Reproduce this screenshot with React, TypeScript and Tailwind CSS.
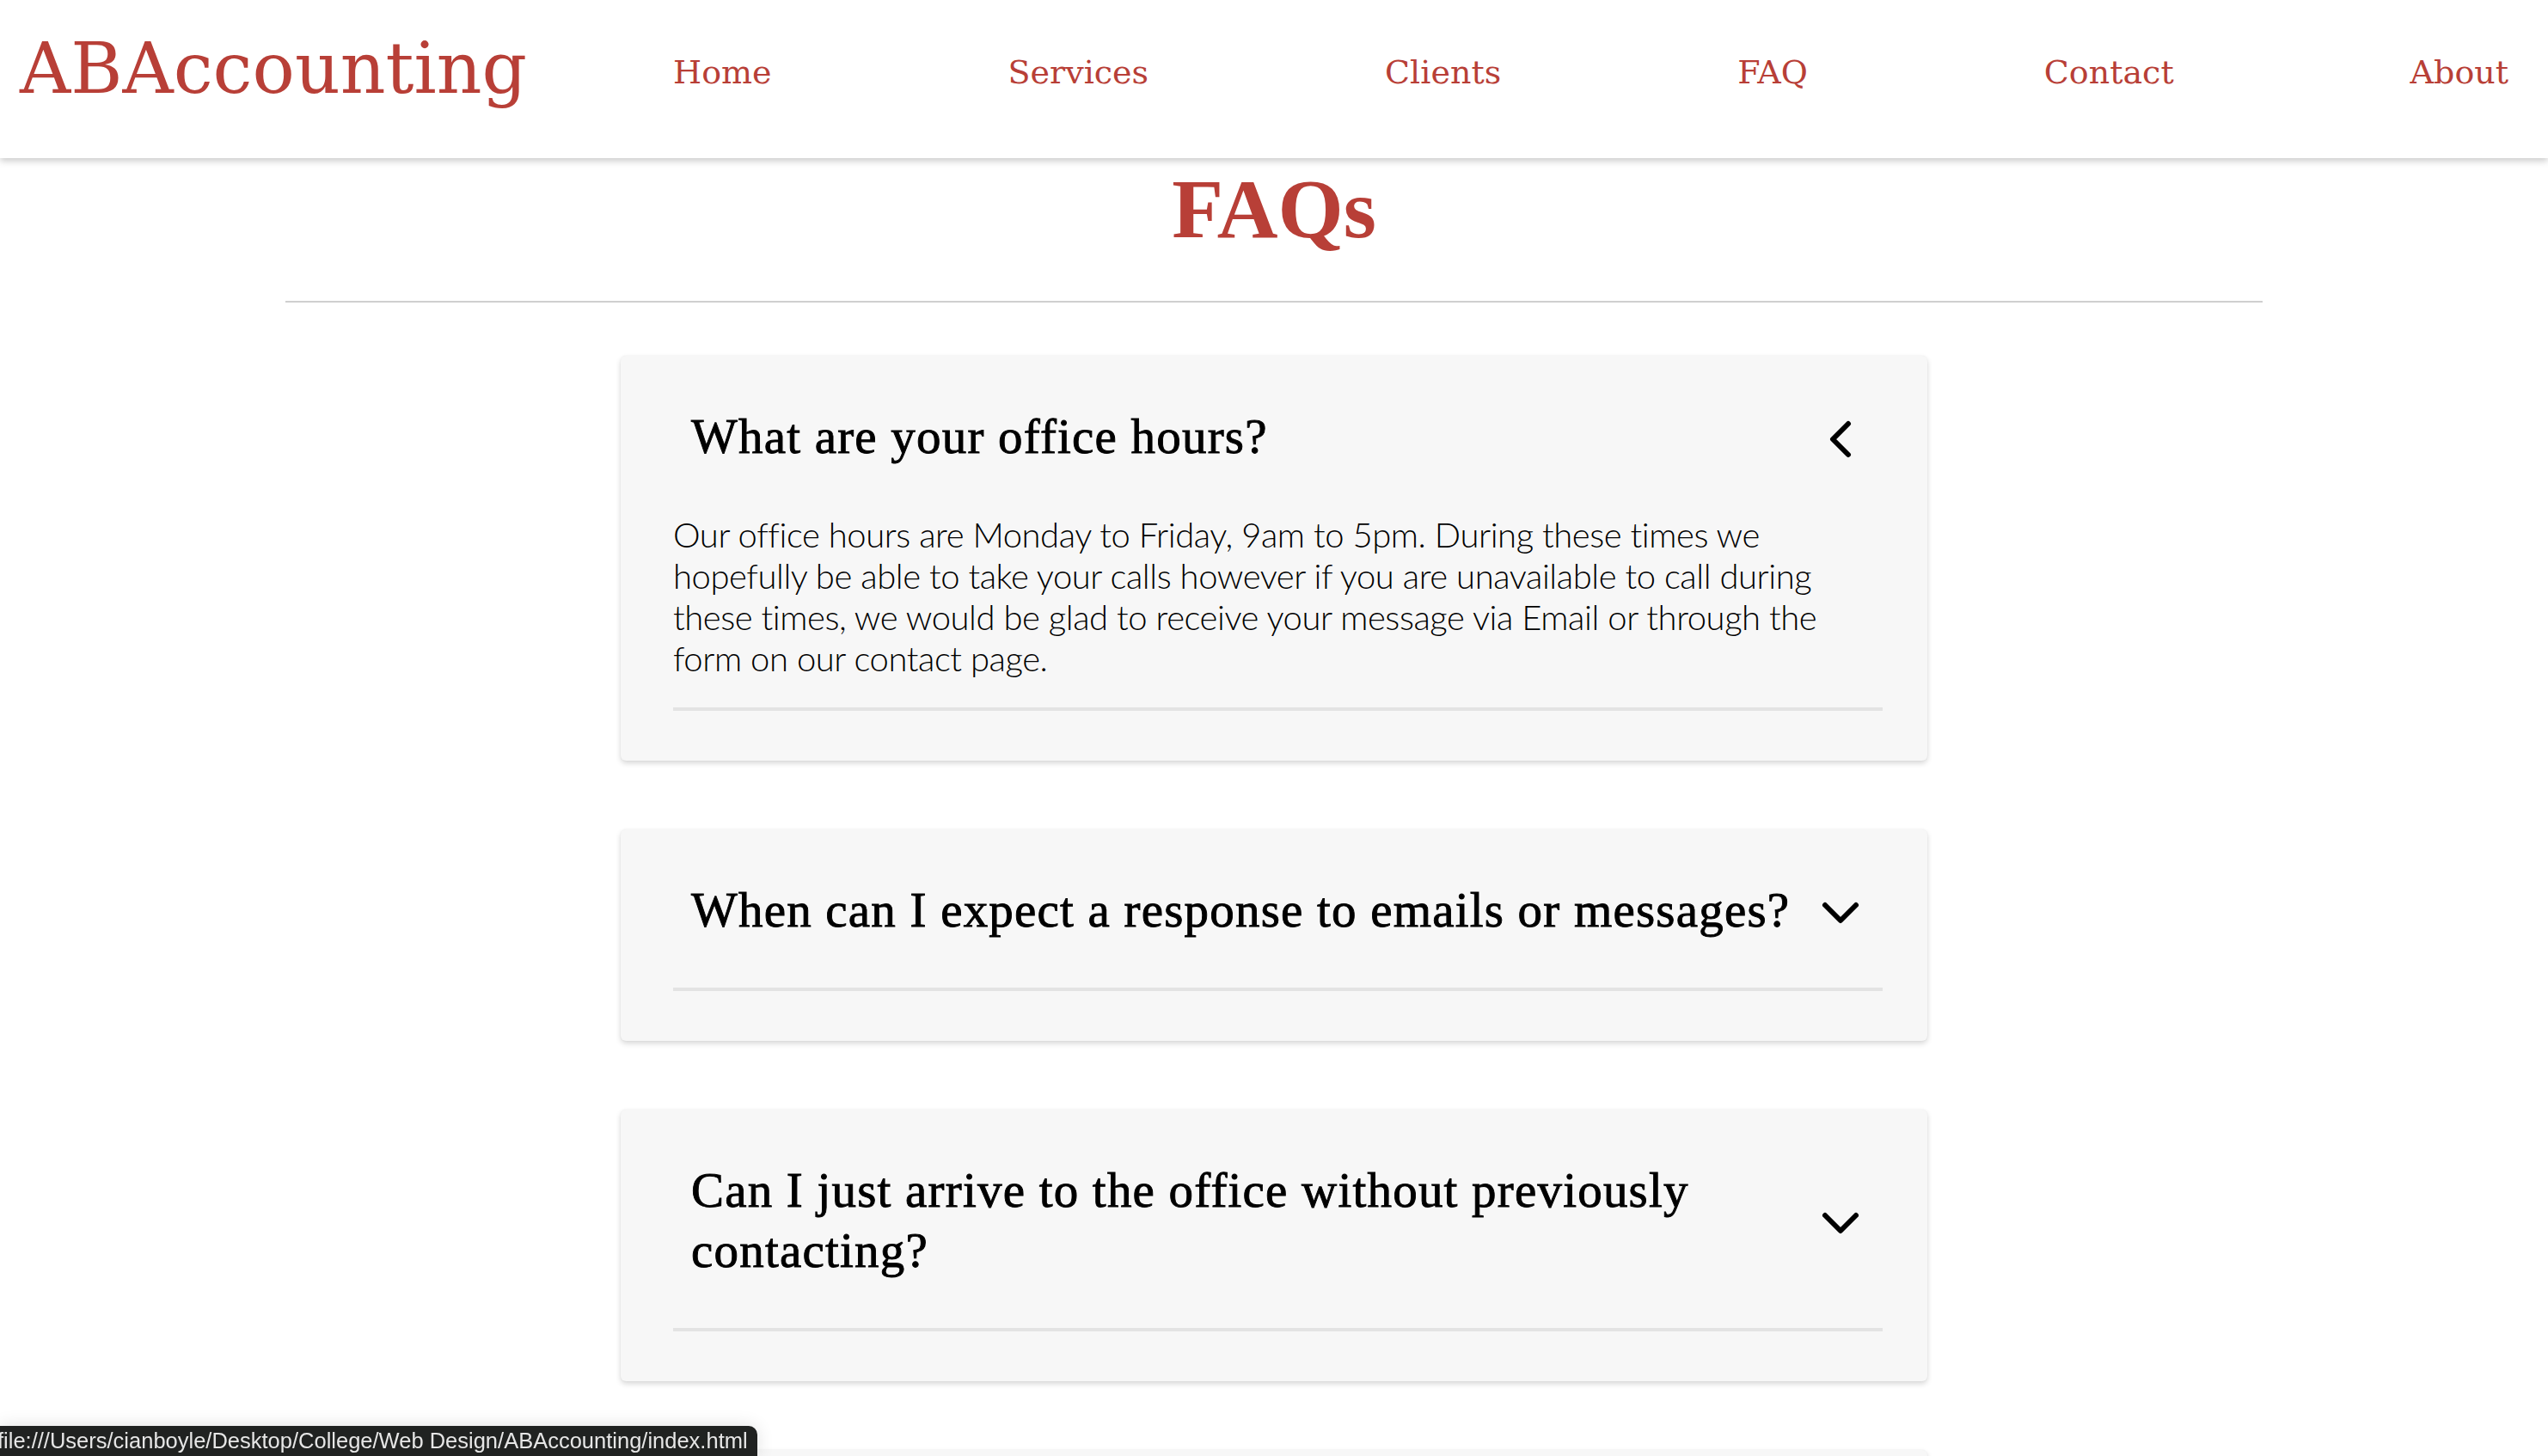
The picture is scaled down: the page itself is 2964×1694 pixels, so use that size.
import React from "react";
import { ChevronLeft, ChevronDown } from "lucide-react";

const faqs = [
  {
    q: "What are your office hours?",
    a: "Our office hours are Monday to Friday, 9am to 5pm. During these times we hopefully be able to take your calls however if you are unavailable to call during these times, we would be glad to receive your message via Email or through the form on our contact page.",
    open: true,
  },
  { q: "When can I expect a response to emails or messages?", a: "", open: false },
  { q: "Can I just arrive to the office without previously contacting?", a: "", open: false },
  { q: "Do you offer a free initial consultation?", a: "", open: false },
];

function FaqCard({ q, a, open }: { q: string; a: string; open: boolean }) {
  return (
    <div className="w-[1520px] mx-auto bg-[#f7f7f7] rounded-[6px] shadow-[0_3px_6px_rgba(0,0,0,0.16),0_0_2px_rgba(0,0,0,0.05)] pl-[61px] pr-[52px] pt-[59px] pb-[58px]">
      <div className="flex items-center justify-between gap-4 pl-[21px]">
        <h3
          className="text-[57px] leading-[70px] tracking-[1.2px] text-black [-webkit-text-stroke:0.9px_#000]"
          style={{ fontFamily: '"Liberation Serif", "DejaVu Serif", serif' }}
        >
          {q}
        </h3>
        <div className="mr-[13px] h-[70px] pt-[6px] flex items-center shrink-0">
          {open ? (
            <ChevronLeft size={72} strokeWidth={2} color="#000" />
          ) : (
            <ChevronDown size={72} strokeWidth={2} color="#000" />
          )}
        </div>
      </div>
      {open && (
        <p
          className="mt-[55px] text-[40px] leading-[48px] tracking-[-0.45px] font-light text-black"
          style={{ fontFamily: 'Lato, "Open Sans", sans-serif' }}
        >
          {a}
        </p>
      )}
      <div className={`${open ? "mt-[33px]" : "mt-[55px]"} h-[4px] bg-[#e3e3e3]`} />
    </div>
  );
}

export default function App() {
  const links = ["Home", "Services", "Clients", "FAQ", "Contact", "About"];
  return (
    <div className="min-h-screen bg-white">
      <nav
        className="relative z-10 h-[184px] bg-white flex items-start pl-[23px] pr-[46px] shadow-[0_3px_8px_rgba(0,0,0,0.22)]"
        style={{ fontFamily: '"DejaVu Serif", serif' }}
      >
        <div className="mt-[39px] text-[82px] leading-[82px] text-[#b83f37]">
          ABAccounting
        </div>
        <ul className="flex-1 flex justify-between ml-[170px] mt-[65px]">
          {links.map((l) => (
            <li key={l} className="text-[38px] leading-[38px] text-[#b83f37]">
              {l}
            </li>
          ))}
        </ul>
      </nav>

      <main className="pb-[200px]">
        <h1
          className="mt-[10px] text-center text-[98px] leading-[98px] font-bold text-[#b83f37]"
          style={{ fontFamily: '"Liberation Serif", serif' }}
        >
          FAQs
        </h1>
        <div className="mt-[58px] w-[2300px] mx-auto h-[2px] bg-[#cfcfcf]" />
        <div className="mt-[62px] flex flex-col gap-[80px]">
          {faqs.map((f) => (
            <FaqCard key={f.q} {...f} />
          ))}
        </div>
      </main>

      <div className="fixed left-0 bottom-0 z-20 h-[35px] w-[881px] bg-[#202221] rounded-tr-[10px] overflow-hidden shadow-[0_0_20px_rgba(0,0,0,0.12)] flex items-center">
        <span
          className="-ml-[3px] text-[25.5px] leading-[35px] text-[#e6e6e6] whitespace-nowrap"
          style={{ fontFamily: '"Liberation Sans", Arial, sans-serif' }}
        >
          file:///Users/cianboyle/Desktop/College/Web Design/ABAccounting/index.html
        </span>
      </div>
    </div>
  );
}
